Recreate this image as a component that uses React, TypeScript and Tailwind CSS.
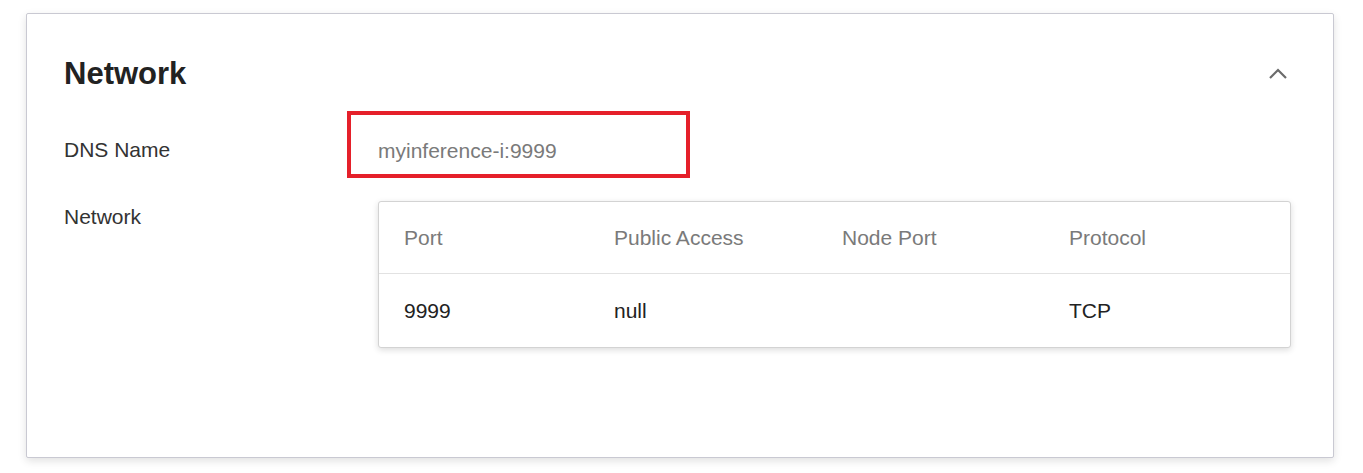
import React from 'react';

const columns = ['Port', 'Public Access', 'Node Port', 'Protocol'];
const rows = [['9999', 'null', '', 'TCP']];
const colWidths = ['w-[210px]', 'w-[228px]', 'w-[227px]', 'flex-1'];

const ChevronUp = () => (
  <svg width="20" height="12" viewBox="0 0 20 12" fill="none" className="mr-[3px] text-[#6b6b6b]">
    <polyline points="2,10 10,2 18,10" stroke="currentColor" strokeWidth="2.2" />
  </svg>
);

export default function App() {
  return (
    <div className="min-h-[473px] bg-white pt-[13px] pl-[26px] font-['Liberation_Sans',Arial,sans-serif]">
      <div className="w-[1308px] h-[445px] bg-white border border-[#c9c9d2] rounded-[2px] shadow-[0_3px_8px_rgba(0,0,0,0.12)] pt-[42px] pl-[37px] pr-[42px]">
        <div className="flex items-center justify-between h-[36px]">
          <h2 className="text-[31px] leading-[36px] font-bold text-[#222]">Network</h2>
          <ChevronUp />
        </div>

        <div className="flex mt-[19px]">
          <div className="w-[283px] pt-[24px] text-[21px] leading-[30px] text-[#333]">DNS Name</div>
          <div className="w-[343px] h-[67px] border-[4px] border-[#e5202a] pl-[27px] pt-[21px] text-[21px] leading-[30px] text-[#7a7a7a]">
            myinference-i:9999
          </div>
        </div>

        <div className="flex mt-[23px]">
          <div className="w-[314px] shrink-0 pt-[1px] text-[21px] leading-[30px] text-[#333]">Network</div>
          <div className="w-[913px] shrink-0 bg-white border border-[#d3d3d3] rounded-[3px] shadow-[0_2px_6px_rgba(0,0,0,0.14)]">
            <div className="flex items-center h-[72px] pl-[25px] border-b border-[#e2e2e2] text-[21px] text-[#7a7a7a]">
              {columns.map((c, i) => (
                <div key={c} className={colWidths[i]}>{c}</div>
              ))}
            </div>
            {rows.map((r, ri) => (
              <div key={ri} className="flex items-center h-[73px] pl-[25px] text-[21px] text-[#222]">
                {r.map((v, i) => (
                  <div key={i} className={colWidths[i]}>{v}</div>
                ))}
              </div>
            ))}
          </div>
        </div>
      </div>
    </div>
  );
}
